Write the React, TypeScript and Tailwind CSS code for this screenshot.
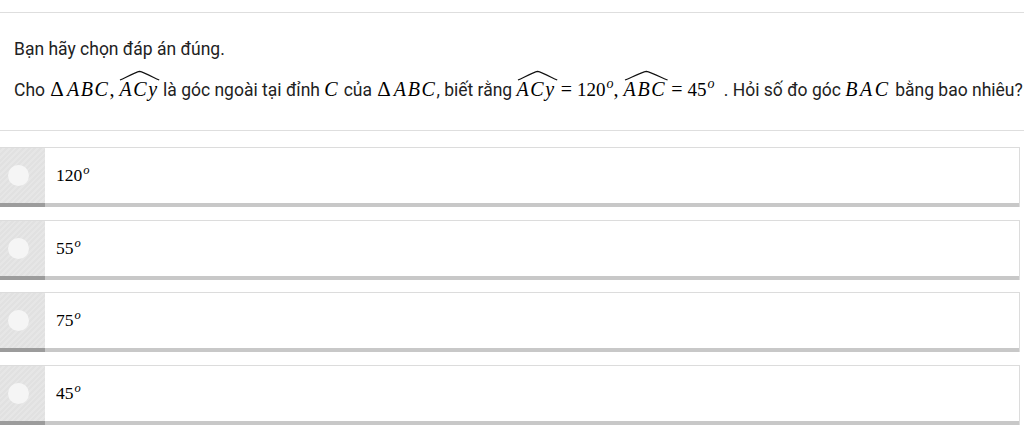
import React from "react";

const serif = "font-['Liberation_Serif','Times_New_Roman',serif]";

function Hat({ children }: { children: React.ReactNode }) {
  return (
    <span className="relative inline-block">
      <svg
        className="absolute left-[1px] top-[-8px] w-full h-[9px] overflow-visible"
        viewBox="0 0 100 10"
        preserveAspectRatio="none"
      >
        <path
          d="M0 10 C 20 6, 40 1.5, 50 0.5 C 60 1.5, 80 6, 100 10"
          stroke="#111"
          strokeWidth={1.2}
          fill="none"
          vectorEffect="non-scaling-stroke"
        />
      </svg>
      {children}
    </span>
  );
}

function I({ children, wide }: { children: React.ReactNode; wide?: boolean }) {
  return (
    <span className={wide ? "italic tracking-[0.13em]" : "italic tracking-[0.08em]"}>
      {children}
    </span>
  );
}

function M({ children }: { children: React.ReactNode }) {
  return (
    <span className={`${serif} text-[20px] leading-none text-black`}>{children}</span>
  );
}

function Tri() {
  return <span className="mr-[3px] ml-[1px] text-[21px]">Δ</span>;
}

function Num({ children }: { children: React.ReactNode }) {
  return <span className="text-[19px]">{children}</span>;
}

function Deg({ extra }: { extra?: boolean }) {
  return (
    <sup className={extra ? "italic text-[14px] top-[-0.6em] ml-[1px] mr-[5px]" : "italic text-[14px] top-[-0.6em] ml-[1px]"}>
      o
    </sup>
  );
}

const Eq = () => <span className="mx-[5px]">=</span>;

function Option({ value, cls }: { value: string; cls: string }) {
  return (
    <div className={`w-[1020px] border-t border-r border-[#dcdcdc] flex flex-col ${cls}`}>
      <div className="flex h-[55px]">
        <div className="w-[45px] shrink-0 flex items-center bg-[repeating-linear-gradient(135deg,#e1e1e1_0px,#e1e1e1_2px,#e6e6e6_2px,#e6e6e6_4px)]">
          <div className="ml-[8px] w-[21px] h-[21px] rounded-full bg-[#f5f5f5]" />
        </div>
        <div className={`flex items-center pl-[11px] ${serif} text-[17.5px] text-black`}>
          <span>
            {value}
            <sup className="italic text-[12.5px] top-[-0.6em] ml-[1px]">o</sup>
          </span>
        </div>
      </div>
      <div className="flex h-[4px]">
        <div className="w-[45px] bg-[#9c9c9c]" />
        <div className="flex-1 bg-[#c8c8c8]" />
      </div>
    </div>
  );
}

export default function App() {
  return (
    <div className="w-[1024px] h-[431px] bg-white overflow-hidden font-['Roboto','Liberation_Sans',sans-serif] text-[#222]">
      <div className="h-[12px]" />
      <div className="border-t border-b border-[#dedede] pt-[24px] pb-[28px] pl-[14px]">
        <div className="text-[17.5px] leading-[24px]">Bạn hãy chọn đáp án đúng.</div>
        <div className="mt-[17px] text-[17.5px] leading-[24px] whitespace-nowrap">
          Cho{" "}
          <M>
            <Tri />
            <I>ABC</I>,{" "}
            <Hat>
              <I>ACy</I>
            </Hat>
          </M>{" "}
          là góc ngoài tại đỉnh{" "}
          <M>
            <I>C</I>
          </M>{" "}
          của{" "}
          <M>
            <Tri />
            <I>ABC</I>
          </M>
          , biết rằng{" "}
          <M>
            <Hat>
              <I>ACy</I>
            </Hat>
            <Eq />
            <Num>120</Num>
            <Deg />,{" "}
            <Hat>
              <I>ABC</I>
            </Hat>
            <Eq />
            <Num>45</Num>
            <Deg extra />
          </M>{" "}
          . Hỏi số đo góc{" "}
          <M>
            <I wide>BAC</I>
          </M>{" "}
          bằng bao nhiêu?
        </div>
      </div>
      <div className="mt-[16px]">
        <Option value="120" cls="" />
        <Option value="55" cls="mt-[13px]" />
        <Option value="75" cls="mt-[12px]" />
        <Option value="45" cls="mt-[13px]" />
      </div>
    </div>
  );
}
